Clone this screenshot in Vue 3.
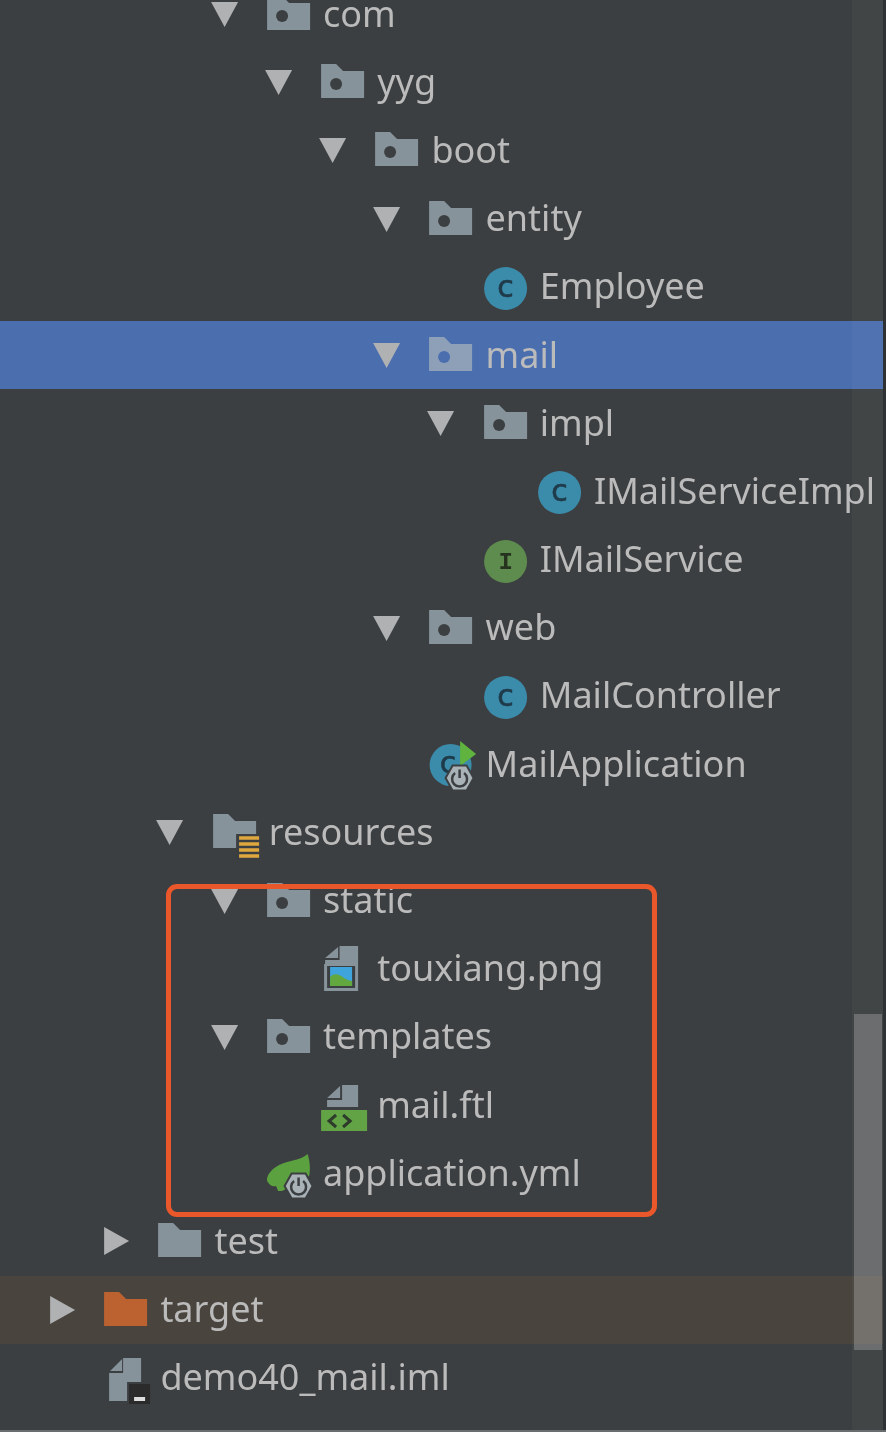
<script setup>
// project tree rows, depth = indent level, kind picks the icon
const rows = [
  { name: 'com', depth: 3, arrow: 'down', icon: 'package' },
  { name: 'yyg', depth: 4, arrow: 'down', icon: 'package' },
  { name: 'boot', depth: 5, arrow: 'down', icon: 'package' },
  { name: 'entity', depth: 6, arrow: 'down', icon: 'package' },
  { name: 'Employee', depth: 7, icon: 'class' },
  { name: 'mail', depth: 6, arrow: 'down', icon: 'package', selected: true },
  { name: 'impl', depth: 7, arrow: 'down', icon: 'package' },
  { name: 'IMailServiceImpl', depth: 8, icon: 'class' },
  { name: 'IMailService', depth: 7, icon: 'interface' },
  { name: 'web', depth: 6, arrow: 'down', icon: 'package' },
  { name: 'MailController', depth: 7, icon: 'class' },
  { name: 'MailApplication', depth: 6, icon: 'bootClass' },
  { name: 'resources', depth: 2, arrow: 'down', icon: 'resources' },
  { name: 'static', depth: 3, arrow: 'down', icon: 'package' },
  { name: 'touxiang.png', depth: 4, icon: 'image' },
  { name: 'templates', depth: 3, arrow: 'down', icon: 'package' },
  { name: 'mail.ftl', depth: 4, icon: 'markup' },
  { name: 'application.yml', depth: 3, icon: 'bootConfig' },
  { name: 'test', depth: 1, arrow: 'right', icon: 'folder' },
  { name: 'target', depth: 0, arrow: 'right', icon: 'excluded', excluded: true },
  { name: 'demo40_mail.iml', depth: 0, icon: 'module' },
]

const folderPath = 'M0 6H15L22 13H43V40H0Z'
const hexPath = 'M17.5 37L24.5 24.5H38.5L45.5 37L38.5 49.5H24.5Z'
</script>

<template>
  <div class="panel">
    <div class="tree">
      <div
        v-for="row in rows"
        :key="row.name"
        class="row"
        :class="{ selected: row.selected, excluded: row.excluded }"
      >
        <span class="indent" :style="{ width: row.depth * 54.2 + 'px' }"></span>
        <svg class="slot" viewBox="0 0 54 48" width="54" height="48">
          <polygon v-if="row.arrow === 'down'" class="arrow" points="-2,12 25,12 11.5,37" />
          <polygon v-if="row.arrow === 'right'" class="arrow" points="0,10 25,24 0,38" />
        </svg>
        <svg class="slot" viewBox="0 0 54 48" width="54" height="48">
          <template v-if="row.icon === 'package'">
            <path class="folder" :d="folderPath" />
            <circle class="hole" cx="15" cy="26" r="6" />
          </template>
          <path v-else-if="row.icon === 'folder'" class="folder" :d="folderPath" />
          <path v-else-if="row.icon === 'excluded'" class="folder-orange" :d="folderPath" />
          <template v-else-if="row.icon === 'class'">
            <circle class="class-bg" cx="21.5" cy="25.5" r="21.5" />
            <text class="glyph" x="21.5" y="33.5" text-anchor="middle">c</text>
          </template>
          <template v-else-if="row.icon === 'interface'">
            <circle class="iface-bg" cx="21.5" cy="25.5" r="21.5" />
            <text class="glyph-i" x="21.5" y="33" text-anchor="middle">I</text>
          </template>
          <template v-else-if="row.icon === 'bootClass'">
            <circle class="class-bg" cx="21.5" cy="25" r="21" />
            <text class="glyph" x="19" y="33" text-anchor="middle">c</text>
            <polygon class="run" points="31,1 47,14 31,26" />
            <path class="hex" transform="translate(-1 1)" :d="hexPath" />
            <path class="power" transform="translate(-1 1)" d="M27 32A7.5 7.5 0 1 0 36 32M31.5 28.5V37" />
          </template>
          <template v-else-if="row.icon === 'bootConfig'">
            <path class="leaf" d="M40.5 5C33 12 21 11 12 16C4 20-1 27 0 32C3 37 6 38 9 37L11 42L15 42L42 27C44 18 42 10 40.5 5Z" />
            <path class="hex" :d="hexPath" />
            <path class="power" d="M27 32A7.5 7.5 0 1 0 36 32M31.5 28.5V37" />
          </template>
          <template v-else-if="row.icon === 'resources'">
            <path class="folder" :d="folderPath" />
            <rect class="cut" x="23" y="26" width="26" height="26" />
            <path class="bars" d="M26 30H46M26 36H46M26 42H46M26 48H46" />
          </template>
          <template v-else-if="row.icon === 'image'">
            <polygon class="folder" points="4,13 17,2 17,13" />
            <path class="folder" d="M18.5 1H37V19H4V15H18.5Z" />
            <rect class="folder" x="3" y="19" width="34" height="27" />
            <rect class="cut" x="6" y="21" width="28" height="22" />
            <rect class="sky" x="9" y="22" width="22" height="19" />
            <path class="hill" d="M9 32C14 27 19 30 23 33C26 35 29 36 31 36V41H9Z" />
          </template>
          <template v-else-if="row.icon === 'markup'">
            <polygon class="folder" points="6,17 19,5 19,17" />
            <path class="folder" d="M21 4H37V26H6V19H21Z" />
            <rect class="tag-bg" x="0" y="29" width="46" height="21" />
            <path class="tag" d="M15 34L8 40L15 46M22 34L29 40L22 46" />
          </template>
          <template v-else-if="row.icon === 'module'">
            <polygon class="folder" points="6,17 18,5 18,17" />
            <path class="folder" d="M19 4H37V47H5V19H19Z" />
            <rect class="cut" x="23" y="28" width="25" height="24" />
            <rect class="badge" x="25" y="30" width="21" height="20" />
            <rect class="dash" x="30" y="43" width="11" height="4" />
          </template>
        </svg>
        <span class="label">{{ row.name }}</span>
      </div>
    </div>

    <div class="track"><div class="thumb"></div></div>
    <div class="edge"></div>
    <div class="foot"></div>
    <div class="mark"></div>
  </div>
</template>

<style scoped>
.panel {
  position: relative;
  width: 886px;
  height: 1432px;
  overflow: hidden;
  background: #3c3f41;
  font-family: "Noto Sans", "DejaVu Sans", sans-serif;
  filter: blur(0.5px);
}
.tree {
  margin-top: -20px;
  padding-left: 50px;
}
.row {
  display: flex;
  align-items: center;
  height: 68.2px;
  margin-left: -50px;
  padding-left: 50px;
  white-space: nowrap;
}
.row.selected { background: #4b6eaf; }
.row.excluded { background: #49453e; }
.indent { flex: none; }
.slot {
  flex: none;
  overflow: visible;
  width: 54.2px;
}
.label {
  margin-left: 2px;
  padding-bottom: 2px;
  font-size: 36px;
  color: #bbbbbb;
}
.arrow { fill: #afb1b3; }
.folder { fill: #87939a; }
.selected .folder { fill: #8ea0b8; }
.folder-orange { fill: #bc6231; }
.hole { fill: #3c3f41; }
.selected .hole { fill: #4b6eaf; }
.cut { fill: #3c3f41; }
.class-bg { fill: #3b8bab; }
.iface-bg { fill: #5e8c4e; }
.glyph {
  fill: #1f3a49;
  stroke: #1f3a49;
  stroke-width: 0.6px;
  font-family: "DejaVu Sans", sans-serif;
  font-size: 30px;
}
.glyph-i {
  fill: #26331f;
  font-family: "Liberation Mono", monospace;
  font-size: 24px;
  font-weight: 700;
}
.run { fill: #5fb33e; }
.leaf { fill: #5ba13f; }
.hex {
  fill: #a9b2b7;
  stroke: #3c3f41;
  stroke-width: 2;
}
.power {
  fill: none;
  stroke: #3c3f41;
  stroke-width: 2.5;
}
.bars {
  fill: none;
  stroke: #dfa83f;
  stroke-width: 3.5;
}
.sky { fill: #3fa3dc; }
.hill { fill: #62a83f; }
.tag-bg { fill: #62a345; }
.tag {
  fill: none;
  stroke: #2e3b2b;
  stroke-width: 3;
}
.badge { fill: #2b2b2b; }
.dash { fill: #dddddd; }
.track {
  position: absolute;
  top: 0;
  right: 3px;
  bottom: 0;
  width: 31px;
  background: rgba(255, 255, 255, 0.03);
}
.thumb {
  position: absolute;
  top: 1014px;
  left: 2px;
  width: 28px;
  height: 336px;
  background: rgba(255, 255, 255, 0.22);
}
.edge {
  position: absolute;
  top: 0;
  right: 0;
  bottom: 0;
  width: 3px;
  background: #2f3234;
}
.foot {
  position: absolute;
  left: 0;
  right: 0;
  bottom: 0;
  height: 2px;
  background: #6a6d6f;
}
.mark {
  position: absolute;
  left: 166px;
  top: 884px;
  width: 491px;
  height: 333px;
  box-sizing: border-box;
  border: 5px solid #e9572b;
  border-radius: 11px;
}
</style>
